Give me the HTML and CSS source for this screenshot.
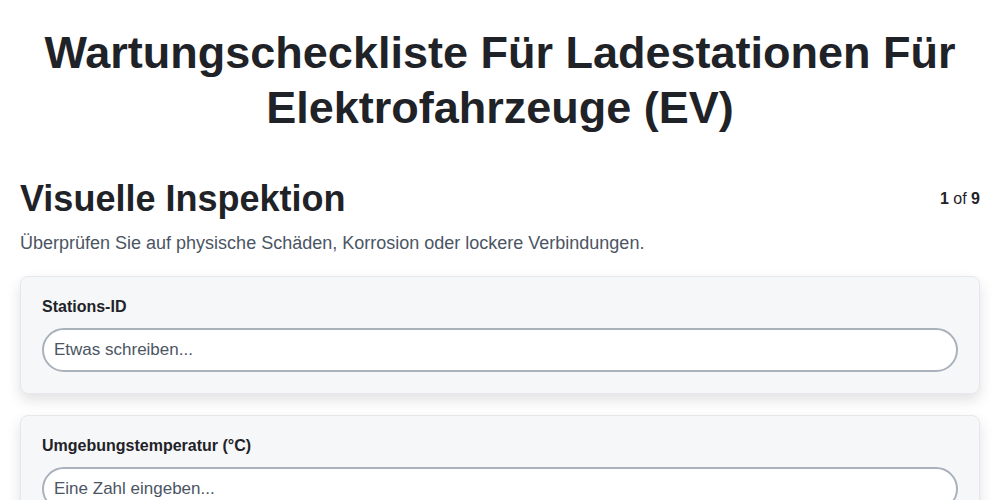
FILE: index.html
```html
<!DOCTYPE html>
<html lang="de">
<head>
    <meta charset="UTF-8">
    <meta name="viewport" content="width=device-width, initial-scale=1.0">
    <title>Wartungscheckliste</title>
    <link rel="stylesheet" href="styles.css">
</head>
<body>
    <h1 class="page-title">Wartungscheckliste Für Ladestationen Für Elektrofahrzeuge (EV)</h1>

    <div class="section-head">
        <h2>Visuelle Inspektion</h2>
        <div class="step-count"><b>1</b> of <b>9</b></div>
    </div>
    <p class="section-desc">Überprüfen Sie auf physische Schäden, Korrosion oder lockere Verbindungen.</p>

    <div class="field-card">
        <label class="field-label" for="stationId">Stations-ID</label>
        <input class="field-input" id="stationId" type="text" placeholder="Etwas schreiben...">
    </div>

    <div class="field-card">
        <label class="field-label" for="temp">Umgebungstemperatur (°C)</label>
        <input class="field-input" id="temp" type="number" placeholder="Eine Zahl eingeben...">
    </div>
</body>
</html>
```

FILE: styles.css
```css
* {
    margin: 0;
    padding: 0;
    box-sizing: border-box;
}

body {
    font-family: 'Liberation Sans', Arial, sans-serif;
    color: #1f2328;
    background: #ffffff;
    padding: 25px 20px 40px;
}

.page-title {
    font-size: 45px;
    line-height: 55px;
    font-weight: 700;
    text-align: center;
    margin-bottom: 42px;
}

.section-head {
    display: flex;
    justify-content: space-between;
    align-items: center;
}

.section-head h2 {
    font-size: 36px;
    line-height: 44px;
    font-weight: 700;
}

.step-count {
    font-size: 16px;
    color: #1f2328;
}

.section-desc {
    font-size: 18px;
    line-height: 24px;
    color: #4b5563;
    margin-top: 10px;
    margin-bottom: 21px;
}

.field-card {
    background: #f6f7f9;
    border: 1px solid #e5e7eb;
    border-radius: 8px;
    padding: 21px;
    margin-bottom: 21px;
    box-shadow: 0 6px 14px rgba(0, 0, 0, 0.12);
}

.field-label {
    display: block;
    font-size: 16px;
    font-weight: 700;
    margin-bottom: 12px;
}

.field-input {
    display: block;
    width: 100%;
    height: 44px;
    border: 2px solid #a9b1bb;
    border-radius: 22px;
    background: #ffffff;
    padding: 0 10px;
    font-family: inherit;
    font-size: 17px;
    color: #1f2328;
}

.field-input::placeholder {
    color: #4b5563;
}

.field-input::-webkit-outer-spin-button,
.field-input::-webkit-inner-spin-button {
    -webkit-appearance: none;
    margin: 0;
}
```
